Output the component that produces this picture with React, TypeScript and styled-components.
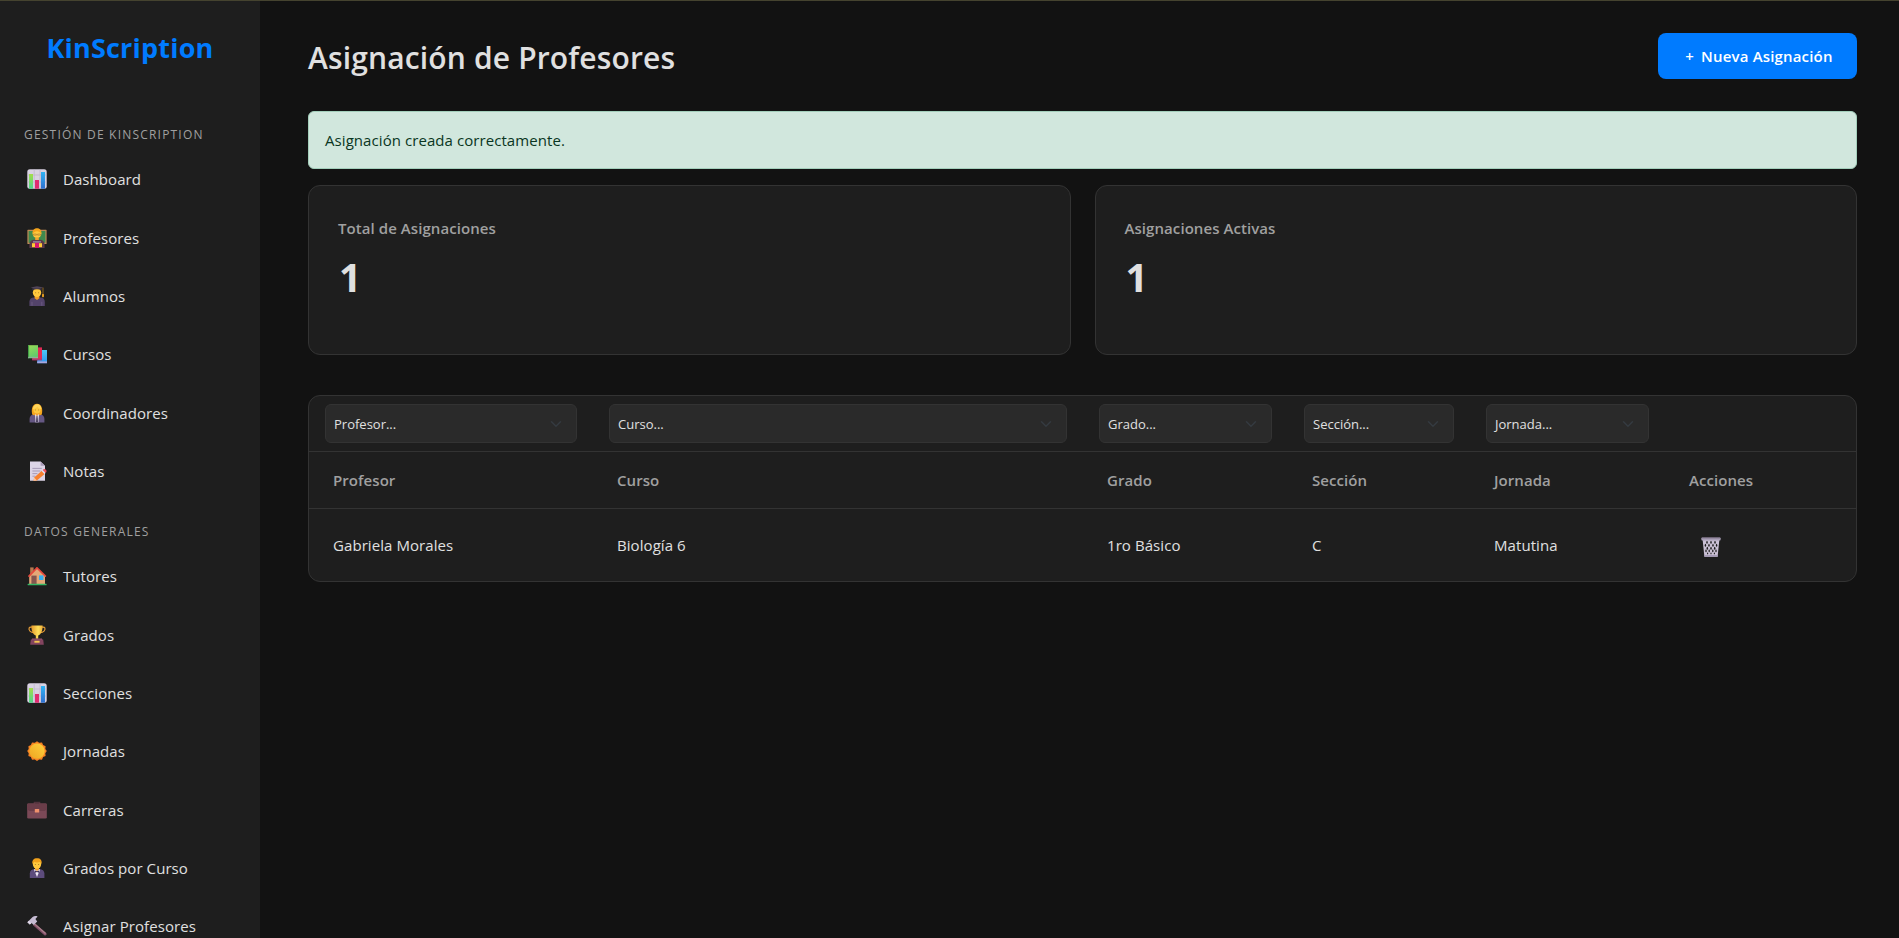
import React from "react";
import styled, { createGlobalStyle } from "styled-components";

const GlobalStyle = createGlobalStyle`
  *, *::before, *::after { box-sizing: border-box; }
  html, body { margin: 0; padding: 0; background: #121212; overflow: hidden; }
  body {
    font-family: "Segoe UI", "Open Sans", "Noto Sans", sans-serif;
    font-size: 15px;
    letter-spacing: 0.07px;
    color: #e0e0e0;
  }
`;

const Shell = styled.div`
  display: flex;
  height: 938px;
  overflow: hidden;
  border-top: 1px solid #45432f;
  background: #121212;
`;

const Sidebar = styled.aside`
  flex: 0 0 260px;
  height: 100%;
  overflow: hidden;
  background: #1e1e1e;
`;

const Brand = styled.div`
  height: 102.4px;
  padding-top: 27px;
  text-align: center;
  font-size: 27px;
  line-height: 40px;
  font-weight: 700;
  color: #007bff;
  letter-spacing: 0.2px;
`;

const SectionLabel = styled.h2`
  margin: 0;
  height: 46.6px;
  padding: 23px 0 0 24px;
  font-size: 12px;
  line-height: 18px;
  font-weight: 400;
  letter-spacing: 1.2px;
  text-transform: uppercase;
  color: #a0a0a0;
`;

const NavList = styled.ul`
  margin: 0;
  padding: 0;
  list-style: none;
`;

const NavItem = styled.li`
  display: flex;
  align-items: center;
  gap: 16px;
  height: 58.4px;
  padding-left: 27px;
  white-space: nowrap;

  svg { flex: none; }
`;

const NavText = styled.span`
  line-height: 22px;
`;

const Main = styled.main`
  flex: 1;
  min-width: 0;
  padding: 32px 42px 0 48px;
`;

const Header = styled.header`
  display: flex;
  justify-content: space-between;
  height: 46px;
  margin-bottom: 32px;
`;

const Title = styled.h1`
  margin: 0;
  font-size: 30px;
  line-height: 46px;
  font-weight: 600;
  letter-spacing: 0.15px;
  padding-top: 2px;
`;

const PrimaryButton = styled.button`
  display: flex;
  align-items: center;
  justify-content: center;
  gap: 7px;
  width: 199px;
  height: 46px;
  padding: 0 0 0 3px;
  border: 0;
  border-radius: 8px;
  background: #007bff;
  color: #fff;
  font: 600 15px/22px "Segoe UI", "Open Sans", sans-serif;
  letter-spacing: 0.17px;
  white-space: nowrap;
`;

const Alert = styled.div`
  height: 58px;
  padding: 0 16px;
  margin-bottom: 16px;
  border: 1px solid #a3cfbb;
  border-radius: 6px;
  background: #d1e7dd;
  color: #0a3622;
  line-height: 57px;
`;

const Stats = styled.section`
  display: grid;
  grid-template-columns: 1fr 1fr;
  gap: 24px;
  margin-bottom: 40px;
`;

const StatCard = styled.article`
  height: 170px;
  padding: 30px 29px;
  border: 1px solid #333;
  border-radius: 12px;
  background: #1e1e1e;
`;

const StatLabel = styled.h3`
  margin: 0;
  font-size: 15px;
  line-height: 24px;
  font-weight: 600;
  color: #a0a0a0;
`;

const StatValue = styled.div`
  margin-top: 8px;
  padding-left: 1px;
  font-size: 39px;
  line-height: 58px;
  font-weight: 700;
`;

const TableCard = styled.section`
  border: 1px solid #333;
  border-radius: 12px;
  background: #1e1e1e;
  overflow: hidden;
`;

const Row = styled.div<{ $height: number; $last?: boolean }>`
  display: grid;
  grid-template-columns: 284px 490px 205px 182px 195px 1fr;
  align-items: center;
  height: ${(p) => p.$height}px;
  border-bottom: ${(p) => (p.$last ? "0" : "1px solid #333")};
`;

const FilterCell = styled.div`
  padding: 0 16px;
`;

const Select = styled.div`
  display: flex;
  align-items: center;
  justify-content: space-between;
  height: 39px;
  padding: 0 12px 0 8px;
  border: 1px solid #333;
  border-radius: 6px;
  background: #2a2a2a;
  font-size: 13px;
  letter-spacing: 0;
`;

const HeadCell = styled.div`
  padding-left: 24px;
  font-weight: 600;
  color: #a0a0a0;
`;

const Cell = styled.div`
  padding-left: 24px;
`;

const TrashButton = styled.button`
  display: block;
  margin: 4px 0 0 12px;
  padding: 0;
  border: 0;
  background: none;
  line-height: 0;
`;

const Icon = ({ children }: { children: React.ReactNode }) => (
  <svg width="20" height="20" viewBox="0 0 20 20">
    {children}
  </svg>
);

const ChartIcon = () => (
  <Icon>
    <defs>
      <linearGradient id="barGreen" x1="0" y1="0" x2="0" y2="1"><stop offset="0" stopColor="#a4dc4a" /><stop offset="1" stopColor="#4fd68c" /></linearGradient>
      <linearGradient id="barBlue" x1="0" y1="0" x2="0" y2="1"><stop offset="0" stopColor="#2fb4f5" /><stop offset="1" stopColor="#2f6fce" /></linearGradient>
    </defs>
    <rect x="0.3" y="0.3" width="19.4" height="19.4" rx="2.5" fill="#d9d2e2" />
    <path d="M7.2 0.5v19M13 0.5v19M0.5 6h19M0.5 13h19" stroke="#bdb3ca" strokeWidth="0.7" />
    <rect x="2" y="5" width="4" height="14.7" fill="url(#barGreen)" />
    <rect x="8" y="11" width="4" height="8.7" fill="#e02c70" />
    <rect x="14" y="3" width="4" height="16.7" fill="url(#barBlue)" />
  </Icon>
);

const TeacherIcon = () => (
  <Icon>
    <rect x="0.4" y="1.8" width="19.2" height="14.2" rx="0.6" fill="#c08a55" />
    <rect x="1.6" y="3" width="16.8" height="11.8" fill="#3f8a4e" />
    <path d="M2.4 20v-3.6c0-3 2.2-4.6 4.6-4.6h6c2.4 0 4.6 1.6 4.6 4.6V20z" fill="#5c3a4a" />
    <circle cx="10" cy="5.6" r="4.4" fill="#ffc83d" />
    <path d="M5.6 5.4C5.2 2 7.6 0.2 10 0.2s4.8 1.8 4.4 5.2C13 4.6 12 3.2 10 3.2S7 4.6 5.6 5.4z" fill="#f5a41c" />
    <path d="M6.4 6h3v1.2h-3zM10.6 6h3v1.2h-3z" fill="none" stroke="#9a6a30" strokeWidth="0.5" />
    <rect x="8.2" y="9.4" width="3.6" height="2.6" fill="#f2a32c" />
    <path d="M5 15.2h10v4H5z" fill="#ffca35" />
    <path d="M8 14.4h4V20H8z" fill="#d4186c" />
    <path d="M6 13.2h8v1.4H6z" fill="#9686a4" />
  </Icon>
);

const StudentIcon = () => (
  <Icon>
    <path d="M2.4 20v-4.2c0-3 2-4.4 4.6-4.4h6.4c2.6 0 4.4 1.4 4.4 4.4V20z" fill="#53436a" />
    <path d="M5 19.8v-4M14.8 19.8v-4" stroke="#79688f" strokeWidth="0.6" />
    <path d="M7.6 9h4.8v3.2L10 14l-2.4-1.8z" fill="#f09d26" />
    <ellipse cx="10" cy="6.6" rx="4.2" ry="4.4" fill="#ffc83d" />
    <path d="M8.6 6.4v.8M11.6 6.4v.8" stroke="#7a5520" strokeWidth="0.7" />
    <path d="M5.4 1.6h9.2v2.6C12 3 8 3 5.4 4.2z" fill="#3d3542" />
    <path d="M3.4 1.4L10 0.2l6.6 1.2L10 2.8z" fill="#504458" />
    <path d="M16 1.6v7" stroke="#c58620" strokeWidth="0.7" />
    <rect x="15.1" y="8" width="1.8" height="3.2" rx="0.6" fill="#f5a623" />
  </Icon>
);

const BooksIcon = () => (
  <Icon>
    <defs>
      <linearGradient id="bookGreen" x1="0" y1="0" x2="0.4" y2="1"><stop offset="0" stopColor="#9bdc55" /><stop offset="1" stopColor="#5fc96c" /></linearGradient>
      <linearGradient id="bookBlue" x1="0" y1="0" x2="0" y2="1"><stop offset="0" stopColor="#4cc9f5" /><stop offset="1" stopColor="#2f93ee" /></linearGradient>
    </defs>
    <path d="M10.2 6H20v13.2h-9.8z" fill="url(#bookBlue)" />
    <path d="M10.2 17.4H20v1.8h-9.8z" fill="#a8a4dc" />
    <path d="M5.2 3.4H15v12.8H5.2z" fill="#e32a55" />
    <path d="M5.2 14.6H15v1.6H5.2z" fill="#a93c73" />
    <path d="M1 1.2h10v13H1z" fill="url(#bookGreen)" />
    <path d="M1 1.2h1.1v13H1z" fill="#44a047" />
    <path d="M1.2 12.8H11v1.3H1.2z" fill="#8db29a" />
  </Icon>
);

const OfficeWomanIcon = () => (
  <Icon>
    <path d="M2.6 19.6v-3.8c0-3 2-4.4 4.6-4.4h5.6c2.600 0 4.600 1.400 4.600 4.400v3.800z" fill="#655783" />
    <path d="M5.200 11.400C3.800 5 6 0.800 10 0.800S16.200 5 14.800 11.400L13 12.200H7z" fill="#f5a51d" />
    <path d="M8 11h4l-.6 8.600H8.600z" fill="#e9e2ef" />
    <path d="M8.400 9h3.200v2.600L10 13l-1.600-1.400z" fill="#f2a132" />
    <path d="M9.500 12.800h1l.5 6.600H9z" fill="#3f3354" />
    <ellipse cx="10" cy="6.600" rx="3.700" ry="4" fill="#ffc93f" />
    <path d="M5.800 6.200C6 3 8 1.200 10.400 1.200c2.200 0 3.800 1.800 4 5-1.800-.3-3.200-1.300-4-2.600-1 1.400-2.600 2.300-4.600 2.600z" fill="#ffd65c" />
    <path d="M8.400 6.600v.8M11.600 6.600v.8" stroke="#7a5520" strokeWidth="0.600" />
  </Icon>
);

const MemoIcon = () => (
  <Icon>
    <path d="M3 0.4h10.6L18 4.8v15H3z" fill="#dcd4e6" />
    <path d="M13.6 0.4V4.8H18z" fill="#a99bb8" />
    <path d="M5.4 7.4h9.4M5.4 10h8M5.4 12.6h5M5.4 15.2h3" stroke="#a294b2" strokeWidth="0.9" />
    <path d="M7.2 16.4L14.8 9.8l2.8 3.1-7.7 6.7-3.4.2z" fill="#f8812f" />
    <path d="M14.6 10l1.2-1.1 2.8 3.1-1.2 1z" fill="#e4ddec" />
    <path d="M15.8 8.9c1.2-1.2 2.2-1.1 3.1-.1s1 2-.3 3.2z" fill="#ee4e5a" />
    <path d="M7.2 16.4l2.7 3.2-3.4.2z" fill="#ffc79c" />
  </Icon>
);

const HouseIcon = () => (
  <Icon>
    <path d="M3.2 1.4h3.4V8H3.2z" fill="#b8794f" />
    <path d="M2.2 10L10 2l8 8v9H2.2z" fill="#e3a878" />
    <path d="M10 1.9L2 10.2M10 1.9l8.4 8.3" stroke="#e5483d" strokeWidth="1.700" strokeLinecap="round" />
    <rect x="4.4" y="9.6" width="5.2" height="8.8" fill="#84564f" />
    <rect x="12" y="9.4" width="4.4" height="4.6" fill="#36adf0" />
    <rect x="0.6" y="17.8" width="19" height="1.5" rx="0.5" fill="#36b765" />
  </Icon>
);

const TrophyIcon = () => (
  <Icon>
    <defs>
      <linearGradient id="gold" x1="0" y1="0" x2="1" y2="0"><stop offset="0" stopColor="#e59a2b" /><stop offset="0.6" stopColor="#ffe05a" /><stop offset="1" stopColor="#f0b038" /></linearGradient>
    </defs>
    <path d="M5 2.2C1.8 1.4 1.2 4 3 6.2c1.2 1.2 2.6 1.6 4 1.5M15 2.2c3.2-.8 3.8 1.8 2 4-1.2 1.2-2.6 1.6-4 1.5" fill="none" stroke="#e09a38" strokeWidth="1.2" />
    <path d="M4.4 0.4h11.2c.2 5-1.4 8.6-4.4 10.2v3.2H8.8v-3.2C5.8 9 4.2 5.4 4.4 0.4z" fill="url(#gold)" />
    <path d="M5 13.4h10l.4 2.4H4.6z" fill="#9a5470" />
    <path d="M3.8 14.6h12.4l.6 5.2H3.2z" fill="#83445f" />
    <rect x="7.4" y="15.8" width="5.2" height="1.9" fill="#f3c550" />
  </Icon>
);

const SunIcon = () => (
  <Icon>
    <defs>
      <linearGradient id="sun" x1="1" y1="0" x2="0" y2="1"><stop offset="0" stopColor="#ffd23c" /><stop offset="1" stopColor="#eda522" /></linearGradient>
    </defs>
    <path
      d="M10 .2l2.2 1.6 2.8-.3 1.1 2.5 2.5 1.2-.3 2.7 1.500 2.100-1.500 2.200.3 2.800-2.500 1.100-1.100 2.600-2.800-.3L10 20l-2.200-1.600-2.800.3-1.100-2.600-2.500-1.100.3-2.800L.2 10l1.500-2.100-.3-2.700 2.500-1.200L5 1.500l2.800.3z"
      fill="#f78322"
    />
    <circle cx="10" cy="10.1" r="7.700" fill="url(#sun)" />
  </Icon>
);

const BriefcaseIcon = () => (
  <Icon>
    <path d="M7.4 4V2.400h5.200V4" fill="none" stroke="#52333d" strokeWidth="1.4" />
    <rect x="0.2" y="3.4" width="19.6" height="15.2" rx="1.3" fill="#7b4957" />
    <path d="M.2 4.7c0-.8.6-1.300 1.300-1.300h17c.7 0 1.300.5 1.300 1.300v4.600L17.600 11H2.400L.2 9.300z" fill="#6a3d49" />
    <rect x="7.800" y="9" width="4.400" height="3.600" rx="0.500" fill="#f0916c" />
  </Icon>
);

const TuxedoIcon = () => (
  <Icon>
    <path d="M2.8 20v-4.400c0-3 2-4.400 4.600-4.400h5.200c2.600 0 4.800 1.400 4.800 4.400V20z" fill="#5d4c7c" />
    <path d="M6.8 11.200h6.400L10 19z" fill="#efe8f6" />
    <path d="M8 8.600h4v3L10 13l-2-1.400z" fill="#ee9d2c" />
    <ellipse cx="10" cy="6" rx="4.200" ry="4.800" fill="#ffc83d" />
    <path d="M5.400 5.800C4.800 2.200 6.800.2 10 .2c3.400 0 5.200 2 4.600 5.600-.8-.4-1.200-1.200-1.400-2-2 .8-4.600.8-6.200 0-.2.8-.8 1.600-1.600 2z" fill="#f2a21c" />
    <path d="M8.400 6v.9M11.600 6v.9" stroke="#7a5520" strokeWidth="0.7" />
    <path d="M8 12.400l2 .9 2-.9v2.400l-2-.9-2 .9z" fill="#403057" />
  </Icon>
);

const HammerIcon = () => (
  <Icon>
    <path d="M7.8 7.200l11.600 10c.8 1.400-.6 2.900-2 2.100L6 9.300z" fill="#84506a" />
    <path d="M7.800 7.200l11.200 9.800-.9.900L7 8.300z" fill="#a87f8a" />
    <path d="M.4 6.300L5.600 1c1.400-1 3-1.100 5-.6L8.400 2.900l1.800 2.500L6.700 9 4.600 6.900 2.800 8.500z" fill="#c6bcd3" />
    <path d="M.4 6.300l1.500-1.500 2.400 2.400-1.500 1.300z" fill="#e0d9e8" />
  </Icon>
);

const TrashIcon = () => (
  <svg width="20" height="20" viewBox="0 0 20 20">
    <path d="M1.6 2.6h16.8L16.6 19.8H3.4z" fill="#cbc1d5" />
    <g fill="#1e1e1e">
      {[6, 10, 14].map((x) => (
        <ellipse key={`a${x}`} cx={x} cy={5.4} rx="0.75" ry="1.3" />
      ))}
      {[4.4, 8, 12, 15.6].map((x) => (
        <ellipse key={`b${x}`} cx={x} cy={8.2} rx="0.7" ry="1.5" />
      ))}
      {[6.3, 10, 13.7].map((x) => (
        <ellipse key={`c${x}`} cx={x} cy={11.2} rx="0.75" ry="1.5" />
      ))}
      {[5, 8.2, 11.8, 15].map((x) => (
        <ellipse key={`d${x}`} cx={x} cy={13.9} rx="0.7" ry="1.4" />
      ))}
      {[6.6, 10, 13.4].map((x) => (
        <ellipse key={`e${x}`} cx={x} cy={16.4} rx="0.6" ry="0.9" />
      ))}
    </g>
    <path d="M3.2 17.9h13.600v1.900H3.400z" fill="#a79cb8" />
    <rect x="0.4" y="0.5" width="19.2" height="3" rx="0.7" fill="#aaa0b8" />
    <rect x="1" y="0.5" width="18" height="0.9" fill="#75697f" />
  </svg>
);

const Chevron = () => (
  <svg width="16" height="12" viewBox="0 0 16 16">
    <path d="m2 5 6 6 6-6" fill="none" stroke="#343a40" strokeWidth="2" strokeLinecap="round" strokeLinejoin="round" />
  </svg>
);

type Item = { label: string; icon: React.FC };

const management: Item[] = [
  { label: "Dashboard", icon: ChartIcon },
  { label: "Profesores", icon: TeacherIcon },
  { label: "Alumnos", icon: StudentIcon },
  { label: "Cursos", icon: BooksIcon },
  { label: "Coordinadores", icon: OfficeWomanIcon },
  { label: "Notas", icon: MemoIcon },
];

const general: Item[] = [
  { label: "Tutores", icon: HouseIcon },
  { label: "Grados", icon: TrophyIcon },
  { label: "Secciones", icon: ChartIcon },
  { label: "Jornadas", icon: SunIcon },
  { label: "Carreras", icon: BriefcaseIcon },
  { label: "Grados por Curso", icon: TuxedoIcon },
  { label: "Asignar Profesores", icon: HammerIcon },
];

const NavSection = ({ title, items }: { title: string; items: Item[] }) => (
  <nav>
    <SectionLabel>{title}</SectionLabel>
    <NavList>
      {items.map(({ label, icon: Glyph }) => (
        <NavItem key={label}>
          <Glyph />
          <NavText>{label}</NavText>
        </NavItem>
      ))}
    </NavList>
  </nav>
);

const filters = ["Profesor...", "Curso...", "Grado...", "Sección...", "Jornada..."];
const headings = ["Profesor", "Curso", "Grado", "Sección", "Jornada", "Acciones"];
const record = ["Gabriela Morales", "Biología 6", "1ro Básico", "C", "Matutina"];

export default function App() {
  return (
    <>
      <GlobalStyle />
      <Shell>
        <Sidebar>
          <Brand>KinScription</Brand>
          <NavSection title="Gestión de KinScription" items={management} />
          <NavSection title="Datos Generales" items={general} />
        </Sidebar>
        <Main>
          <Header>
            <Title>Asignación de Profesores</Title>
            <PrimaryButton>
              <span>+</span>
              <span>Nueva Asignación</span>
            </PrimaryButton>
          </Header>
          <Alert>Asignación creada correctamente.</Alert>
          <Stats>
            <StatCard>
              <StatLabel>Total de Asignaciones</StatLabel>
              <StatValue>1</StatValue>
            </StatCard>
            <StatCard>
              <StatLabel>Asignaciones Activas</StatLabel>
              <StatValue>1</StatValue>
            </StatCard>
          </Stats>
          <TableCard>
            <Row $height={56}>
              {filters.map((f) => (
                <FilterCell key={f}>
                  <Select>
                    <span>{f}</span>
                    <Chevron />
                  </Select>
                </FilterCell>
              ))}
            </Row>
            <Row $height={57}>
              {headings.map((h) => (
                <HeadCell key={h}>{h}</HeadCell>
              ))}
            </Row>
            <Row $height={72} $last>
              {record.map((value) => (
                <Cell key={value}>{value}</Cell>
              ))}
              <Cell>
                <TrashButton aria-label="Eliminar">
                  <TrashIcon />
                </TrashButton>
              </Cell>
            </Row>
          </TableCard>
        </Main>
      </Shell>
    </>
  );
}
